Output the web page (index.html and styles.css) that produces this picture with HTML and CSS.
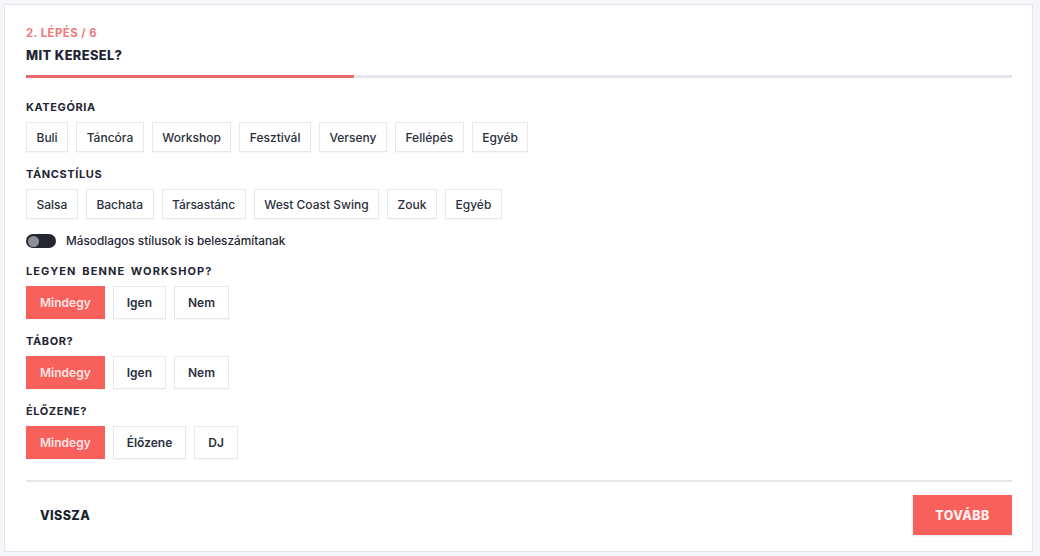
FILE: index.html
```html
<!DOCTYPE html>
<html lang="hu">
<head>
    <meta charset="UTF-8">
    <meta name="viewport" content="width=device-width, initial-scale=1.0">
    <title>Mit keresel?</title>
    <link rel="stylesheet" href="styles.css">
</head>
<body>
    <div class="card">
        <div class="step">2. LÉPÉS / 6</div>
        <h2 class="title">MIT KERESEL?</h2>
        <div class="progress"><div class="progress-fill"></div></div>

        <div class="section">
            <div class="label">KATEGÓRIA</div>
            <div class="chips">
                <button class="chip">Buli</button>
                <button class="chip">Táncóra</button>
                <button class="chip">Workshop</button>
                <button class="chip">Fesztivál</button>
                <button class="chip">Verseny</button>
                <button class="chip">Fellépés</button>
                <button class="chip">Egyéb</button>
            </div>
        </div>

        <div class="section">
            <div class="label">TÁNCSTÍLUS</div>
            <div class="chips">
                <button class="chip">Salsa</button>
                <button class="chip">Bachata</button>
                <button class="chip">Társastánc</button>
                <button class="chip">West Coast Swing</button>
                <button class="chip">Zouk</button>
                <button class="chip">Egyéb</button>
            </div>
        </div>

        <label class="toggle-line">
            <span class="toggle"><span class="knob"></span></span>
            Másodlagos stílusok is beleszámítanak
        </label>

        <div class="section">
            <div class="label label-wide">LEGYEN BENNE WORKSHOP?</div>
            <div class="chips">
                <button class="option active">Mindegy</button>
                <button class="option">Igen</button>
                <button class="option">Nem</button>
            </div>
        </div>

        <div class="section">
            <div class="label">TÁBOR?</div>
            <div class="chips">
                <button class="option active">Mindegy</button>
                <button class="option">Igen</button>
                <button class="option">Nem</button>
            </div>
        </div>

        <div class="section">
            <div class="label">ÉLŐZENE?</div>
            <div class="chips">
                <button class="option active">Mindegy</button>
                <button class="option">Élőzene</button>
                <button class="option">DJ</button>
            </div>
        </div>

        <div class="footer">
            <button class="back">VISSZA</button>
            <button class="next">TOVÁBB</button>
        </div>
    </div>
</body>
</html>
```
FILE: styles.css
```css
body {
    font-family: Inter, "Noto Sans", Arial, sans-serif;
    margin: 0;
    background-color: #f4f6f9;
    color: #1f2533;
}

.card {
    margin: 4px 7px 0 4px;
    height: 548px;
    box-sizing: border-box;
    background-color: #fff;
    border: 1px solid #e2e6ec;
    padding: 20px 20px 0 21px;
}

.step {
    font-size: 11.3px;
    font-weight: 700;
    line-height: 16px;
    letter-spacing: 0.5px;
    color: #ea7a7c;
}

.title {
    margin: 7px 0 0;
    font-size: 12.8px;
    font-weight: 800;
    line-height: 16px;
    letter-spacing: 0.4px;
}

.progress {
    margin-top: 11px;
    height: 3px;
    background-color: #e4e7ec;
}
.progress-fill {
    width: 33.3%;
    height: 100%;
    background-color: #e8696b;
}

.section {
    margin-top: 14px;
}
.progress + .section {
    margin-top: 21px;
}

.label {
    font-size: 11px;
    font-weight: 700;
    line-height: 16px;
    letter-spacing: 0.6px;
    margin-bottom: 7px;
}
.label-wide {
    letter-spacing: 1.1px;
    word-spacing: 2px;
}

.chips {
    display: flex;
    gap: 8px;
}

.chip, .option {
    font-family: inherit;
    background-color: #fff;
    border: 1px solid #e6e8ec;
    color: #2a303c;
    cursor: pointer;
    box-shadow: 0 1px 1px rgba(0, 0, 0, 0.03);
}
.chip {
    height: 30px;
    padding: 0 9.5px;
    font-size: 12px;
    font-weight: 500;
}
.option {
    height: 33px;
    padding: 0 13px;
    font-size: 12px;
    font-weight: 600;
}
.option.active {
    background-color: #f8605c;
    border-color: #f8605c;
    color: #fde5e4;
}

.toggle-line {
    display: flex;
    align-items: center;
    gap: 10px;
    margin-top: 14px;
    height: 16px;
    font-size: 11.8px;
    font-weight: 500;
}
.toggle {
    width: 30px;
    height: 14px;
    border-radius: 7px;
    background-color: #24272d;
    display: flex;
    align-items: center;
    padding-left: 2px;
    box-sizing: border-box;
}
.knob {
    width: 11px;
    height: 11px;
    border-radius: 50%;
    background-color: #8d9097;
}

.footer {
    margin-top: 21px;
    border-top: 2px solid #e5e7eb;
    padding-top: 13px;
    display: flex;
    justify-content: space-between;
    align-items: center;
}
.back, .next {
    font-family: inherit;
    font-size: 12.5px;
    font-weight: 800;
    letter-spacing: 0.4px;
    border: none;
    cursor: pointer;
}
.back {
    background: none;
    color: #1a1f2b;
    padding: 0 14px;
    height: 40px;
}
.next {
    background-color: #f8605c;
    color: #fff0ef;
    width: 99px;
    height: 40px;
    box-shadow: 0 1px 2px rgba(0, 0, 0, 0.1);
}
```
